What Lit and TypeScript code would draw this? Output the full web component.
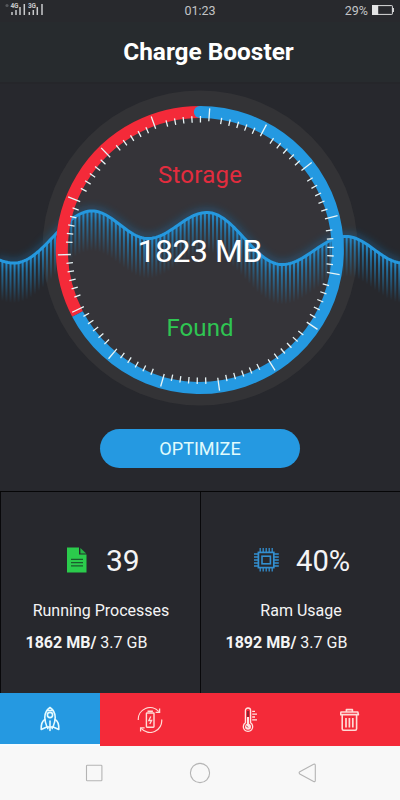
import { LitElement, html, svg, css } from "lit";
import { customElement } from "lit/decorators.js";

// Crests and troughs of the wave, joined by half cosines
const WAVE: [number, number][] = [
  [14, 263], [92, 211], [148, 238.5], [207, 212.5], [282, 264.5], [346, 236.5], [403, 263], [480, 211],
];

function waveY(x: number): number {
  if (x < 14) return 263 - ((14 - x) * (14 - x)) / 70;
  for (let i = 0; i < WAVE.length - 1; i++) {
    const [x0, y0] = WAVE[i];
    const [x1, y1] = WAVE[i + 1];
    if (x <= x1) return y0 + ((y1 - y0) * (1 - Math.cos((Math.PI * (x - x0)) / (x1 - x0)))) / 2;
  }
  return 263;
}

const CX = 199.8;
const CY = 250;

function polar(deg: number, r: number): [number, number] {
  const a = (deg * Math.PI) / 180;
  return [CX + r * Math.sin(a), CY - r * Math.cos(a)];
}

function tick(deg: number, r0: number, r1: number): string {
  const [a, b] = polar(deg, r0);
  const [c, d] = polar(deg, r1);
  return `M${a.toFixed(2)} ${b.toFixed(2)}L${c.toFixed(2)} ${d.toFixed(2)}`;
}

function arc(from: number, to: number, r: number): string {
  const [a, b] = polar(from, r);
  const [c, d] = polar(to, r);
  return `M${a} ${b}A${r} ${r} 0 ${to - from > 180 ? 1 : 0} 1 ${c} ${d}`;
}

@customElement("boost-gauge")
export class BoostGauge extends LitElement {
  static styles = css`
    :host { display: block; height: 322px; }
    svg { display: block; }
    text { font-family: Roboto, sans-serif; text-anchor: middle; }
    .storage { font-size: 24px; fill: #e22c3e; }
    .amount { font-size: 32px; fill: #fff; }
    .found { font-size: 24px; fill: #2fc552; }
  `;

  render() {
    let line = "";
    for (let x = -2; x <= 402; x += 2) line += `${line ? "L" : "M"}${x} ${waveY(x).toFixed(2)}`;
    const bars: number[] = [];
    for (let x = 1.4; x < 400; x += 4.05) bars.push(x);
    let ticks = "";
    for (let i = 0; i < 15; i++) {
      const base = 4 + i * 24;
      ticks += tick(base, 142, 129);
      for (let k = 0; k < 5; k++) ticks += tick(base + 5.4 + k * 3.72, 134, 127.5);
    }
    return html`
      <svg width="400" height="322" viewBox="0 84 400 322">
        <defs>
          <linearGradient id="fade" x1="0" y1="0" x2="0" y2="1">
            <stop offset="0" stop-color="#2496dc" stop-opacity=".9"></stop>
            <stop offset=".4" stop-color="#2189c8" stop-opacity=".6"></stop>
            <stop offset="1" stop-color="#2189c8" stop-opacity="0"></stop>
          </linearGradient>
          <filter id="glow" x="-5%" y="-40%" width="110%" height="180%">
            <feGaussianBlur stdDeviation="4"></feGaussianBlur>
          </filter>
        </defs>
        <circle cx="200" cy="248" r="157.5" fill="#333336"></circle>
        <circle cx=${CX} cy=${CY} r="138" fill="#353439"></circle>
        <path d=${line} fill="none" stroke="#1479bd" stroke-width="7" opacity=".45" filter="url(#glow)"></path>
        ${bars.map((x) => svg`<rect x=${x} y=${waveY(x + 1)} width="2" height="40" fill="url(#fade)"></rect>`)}
        <path d=${line} fill="none" stroke="#2598de" stroke-width="3"></path>
        <path d=${arc(242.4, 360, 138)} fill="none" stroke="#f42a39" stroke-width="12"></path>
        <path d=${arc(0, 242.4, 138)} fill="none" stroke="#2499e1" stroke-width="12"></path>
        <circle cx=${CX} cy=${CY - 138} r="6" fill="#2499e1"></circle>
        <path d=${ticks} stroke="#e8f4f6" stroke-width="1.3"></path>
        <text class="storage" x="200" y="183" textLength="84">Storage</text>
        <text class="amount" x="200" y="262.3" textLength="125">1823 MB</text>
        <text class="found" x="200" y="335.7" textLength="67">Found</text>
      </svg>
    `;
  }
}

@customElement("app-root")
export class AppRoot extends LitElement {
  static styles = css`
    :host {
      display: flex; flex-direction: column; width: 400px; height: 800px; overflow: hidden;
      background: #27282d; color: #f4f4f5; font-family: Roboto, sans-serif;
    }
    svg { display: block; }
    .status {
      height: 22px; display: grid; grid-template-columns: 1fr auto 1fr; align-items: center;
      padding: 0 5px 2px 5px; box-sizing: border-box; font-size: 12.5px; color: #c3c4c6; background: #28292d;
    }
    .battery { display: flex; justify-content: flex-end; align-items: center; gap: 4px; height: 20px; }
    .header {
      height: 60px; line-height: 60px; text-align: center; font-weight: 700; font-size: 24.4px;
      color: #fff; background: #272b2e; padding-left: 17px; border-bottom: 2px solid #25262a;
    }
    .action { height: 85px; display: flex; justify-content: center; align-items: flex-start; padding-top: 23px; box-sizing: border-box; }
    .pill {
      width: 200px; height: 38.5px; border: 0; border-radius: 20px; background: #2599e1; color: #e0fbfc;
      font: 400 18.1px/38px Roboto, sans-serif; padding: 1px 0 0; text-align: center; white-space: nowrap;
    }
    .cells { height: 202px; display: grid; grid-template-columns: 200px 200px; border-top: 1.5px solid #060607; box-sizing: border-box; background: #27282d; }
    .cell { border-left: 1px solid #08080a; }
    .top { display: flex; align-items: center; height: 40px; margin-top: 48px; }
    .processes .top { padding-left: 66px; gap: 19px; }
    .ram .top { padding-left: 52px; gap: 17px; }
    .big { font-size: 30px; line-height: 40px; padding-top: 1px; }
    .ram .big { font-size: 29.2px; }
    .label { font-size: 16px; line-height: 20px; margin-top: 21px; padding-left: 1px; text-align: center; }
    .usage { font-size: 16px; line-height: 20px; margin-top: 12px; padding-left: 24.5px; white-space: nowrap; }
    .tabs { height: 53px; display: grid; grid-template-columns: repeat(4, 100px); background: #f42a39; }
    .tab { height: 53px; display: flex; justify-content: center; align-items: center; }
    .active { height: 51px; background: #2599e1; border-bottom: 2px solid #f6fcff; }
    .system { flex: 1; display: flex; align-items: center; background: #f8f8f8; }
  `;

  render() {
    return html`
      <div class="status">
        <svg width="42" height="16" viewBox="1 0 42 16">
          <circle cx="3" cy="3.5" r="1.6" fill="#55575b"></circle>
          <text x="6.4" y="6" font-size="6.5" font-weight="700" fill="#c9cacc" textLength="8">4G</text>
          <text x="24" y="6" font-size="6.5" font-weight="700" fill="#c9cacc" textLength="8">3G</text>
          <path d="M8 10v3M12 8v5M16 5v8M20.3 2v11M25.3 10v3M29.3 8v5M33.3 5v8M38 2v11" stroke="#c8c9cb" stroke-width="1.5"></path>
        </svg>
        <span>01:23</span>
        <div class="battery">
          <span>29%</span>
          <svg width="23" height="10" viewBox="0 0 23 10">
            <rect x=".6" y=".6" width="19.8" height="8.8" rx=".6" fill="none" stroke="#dcdcdd"></rect>
            <rect x="0" y="0" width="6.2" height="10" fill="#e4e4e5"></rect>
            <path d="M21.2 3v4" stroke="#dcdcdd" stroke-width="1.5"></path>
          </svg>
        </div>
      </div>
      <div class="header">Charge Booster</div>
      <boost-gauge></boost-gauge>
      <div class="action"><button class="pill">OPTIMIZE</button></div>
      <div class="cells">
        <div class="cell processes">
          <div class="top">
            <svg width="20" height="26" viewBox="0 0 20 26">
              <path d="M0 .5H12V7.5H19.5V25.5H0Z" fill="#2bcb4c"></path>
              <path d="M13.4 1L19.2 6.4H13.4Z" fill="#27b346"></path>
              <path d="M4 12.3H16M4 15.6H16M4 18.9H16" stroke="#1b5b2d" stroke-width="1.2"></path>
            </svg>
            <span class="big">39</span>
          </div>
          <div class="label">Running Processes</div>
          <div class="usage"><b>1862 MB/</b> 3.7 GB</div>
        </div>
        <div class="cell ram">
          <div class="top">
            <svg width="26" height="26" viewBox="0 0 26 26" fill="none" stroke="#338fd0">
              <path d="M7.2 1v4.5M10.2 1v4.5M13.2 1v4.5M16.2 1v4.5M19.2 1v4.5M7.2 20.5v4M10.2 20.5v4M13.2 20.5v4M16.2 20.5v4M19.2 20.5v4M1 7h4.5M1 10h4.5M1 13h4.5M1 16h4.5M1 19h4.5M20.8 7h5M20.8 10h5M20.8 13h5M20.8 16h5M20.8 19h5" stroke-width="1.3"></path>
              <rect x="5.4" y="5.4" width="15.4" height="15.2" stroke-width="1.7"></rect>
              <rect x="9" y="9.2" width="8.4" height="7.6" stroke-width="1.6"></rect>
            </svg>
            <span class="big">40%</span>
          </div>
          <div class="label">Ram Usage</div>
          <div class="usage"><b>1892 MB/</b> 3.7 GB</div>
        </div>
      </div>
      <div class="tabs">
        <div class="tab active">
          <svg width="20" height="26" viewBox="0 0 20 26" fill="none" stroke="#e6fbff" stroke-width="1.6" stroke-linejoin="round" stroke-linecap="round">
            <path d="M10 1.5C6.4 4 4.8 7.4 4.8 11.5C4.8 15 5.8 18 7 21H13C14.2 18 15.2 15 15.2 11.5C15.2 7.4 13.6 4 10 1.5Z"></path>
            <path d="M7.3 4.5H12.7"></path>
            <circle cx="10" cy="9" r="2.6"></circle>
            <path d="M4.8 13.5C2.3 15 1 18 1.2 23.4L6.8 21M15.2 13.5C17.7 15 19 18 18.8 23.4L13.2 21M10 15V24.4M7.8 21V22.6M12.2 21V22.6"></path>
          </svg>
        </div>
        <div class="tab">
          <svg width="26" height="26" viewBox="0 0 26 26" fill="none" stroke="#ffdcd6" stroke-width="1.2">
            <path d="M1.3 13A11.7 11.7 0 0 1 21.8 4.6M24.7 12.5A11.7 11.7 0 0 1 4.2 21.4"></path>
            <path d="M22.6 1.6V5.4H18.6M3.6 24.6V20.8H7.6" stroke-width="1.3"></path>
            <rect x="9.4" y="6" width="7.6" height="14.2" rx=".6" stroke-width="1.4"></rect>
            <path d="M11.2 5V4.2H15.2V5" stroke-width="1.4"></path>
            <path d="M13.8 9.5L11.8 13.5H14.6L12.8 17" stroke-width="1.3"></path>
          </svg>
        </div>
        <div class="tab">
          <svg width="16" height="26" viewBox="0 0 16 26" fill="none" stroke="#ffe4e2" stroke-width="1.3">
            <path d="M3.4 15.8V3.6A2.6 2.6 0 0 1 8.6 3.6V15.8A4.7 4.7 0 1 1 3.4 15.8Z"></path>
            <path d="M6 4V10" stroke="#8f2331" stroke-width="2"></path>
            <path d="M6 10V19" stroke-width="2.2"></path>
            <circle cx="6" cy="19.8" r="3" fill="#ffe4e2" stroke="none"></circle>
            <path d="M4.2 18.6L6 20.6" stroke="#a52b38" stroke-width="1"></path>
            <path d="M10.2 4.4H13M10.2 7.2H15M10.2 10H13M10.2 12.8H15"></path>
          </svg>
        </div>
        <div class="tab">
          <svg width="20" height="24" viewBox="0.6 0 20 24" fill="none" stroke="#ffdad6" stroke-width="1.6" stroke-linejoin="round">
            <path d="M7 3.8V1.6H13V3.8M1.6 4H18.4L19 6.6H1ZM2.8 6.8V20.8Q2.8 22.2 4.2 22.2H15.8Q17.2 22.2 17.2 20.8V6.8"></path>
            <path d="M6.6 10V19.6M10 10V19.6M13.4 10V19.6" stroke-width="1.7"></path>
          </svg>
        </div>
      </div>
      <div class="system">
        <svg width="400" height="54" viewBox="0 746 400 54" fill="none" stroke="#b4b4b4" stroke-width="1.1">
          <rect x="86.5" y="765.3" width="15.4" height="15.4" rx=".8"></rect>
          <circle cx="200" cy="773" r="9.6"></circle>
          <path d="M299.8 771.7L313.6 764.3Q315.3 763.6 315.3 765.4V780.4Q315.3 782.2 313.6 781.4L299.8 774Q298.4 772.8 299.8 771.7Z"></path>
        </svg>
      </div>
    `;
  }
}
